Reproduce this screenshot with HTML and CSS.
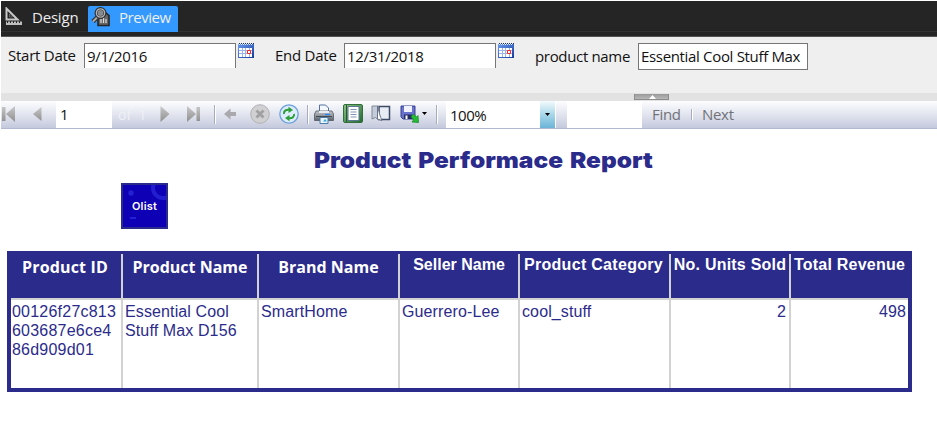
FILE: index.html
```html
<!DOCTYPE html>
<html lang="en">
<head>
<meta charset="utf-8">
<title>Product Performace Report</title>
<link rel="stylesheet" href="styles.css">
</head>
<body>
<svg class="defs" width="0" height="0" aria-hidden="true">
  <defs>
    <linearGradient id="grey" x1="0" y1="0" x2="0" y2="1"><stop offset="0" stop-color="#c9c9c9"/><stop offset="1" stop-color="#8f8f8f"/></linearGradient>
    <linearGradient id="blue" x1="0" y1="0" x2="1" y2="1"><stop offset="0" stop-color="#6b9af0"/><stop offset="1" stop-color="#173c9c"/></linearGradient>
    <linearGradient id="green" x1="0" y1="0" x2="1" y2="1"><stop offset="0" stop-color="#8fc487"/><stop offset="1" stop-color="#1f6b2c"/></linearGradient>
    <linearGradient id="steel" x1="0" y1="0" x2="0" y2="1"><stop offset="0" stop-color="#c4c8ce"/><stop offset="1" stop-color="#5c6068"/></linearGradient>
    <symbol id="calendar" viewBox="0 0 16 16">
      <rect y="1" width="16" height="14" fill="url(#blue)"/>
      <path d="M1 .5h15" stroke="#1c2f66" stroke-dasharray="1 1"/>
      <path d="M1 1.5h14" stroke="#dce8ff" stroke-dasharray="1 1"/>
      <path d="M1 5h13v9H1z" fill="#fff"/>
      <path d="M1 7.5h13M1 10.5h13M4.5 5v9M7.500 5v9M11.500 5v9" stroke="#9ab4e8"/>
      <path d="M9.500 7.500h3v3h-3z" fill="#fff" stroke="#f22"/>
    </symbol>
  </defs>
</svg>
<div class="app">
  <nav class="tabs">
    <div class="tab tab-design">
      <svg width="18" height="19" viewBox="0 0 18 19"><path d="M1.500 1.500v11h11z" fill="none" stroke="#c8c8c8" stroke-width="2"/><path d="M4.500 7v3h3z" fill="#252526" stroke="#888" stroke-width=".6"/><path d="M1 14.500h16v3.500H1z" fill="#bdbdbd"/><path d="M2.500 14v2M5.500 14v2M8.500 14v2M11.500 14v2M14.500 14v2" stroke="#252526"/></svg>
      <span>Design</span>
    </div>
    <div class="tab tab-preview">
      <svg width="20" height="20" viewBox="0 0 20 20"><path d="M7 5.500h7.500l3.500 3V18.500H7z" fill="#666" stroke="#262626" stroke-width="1.600"/><path d="M10 16v-4M12.500 16v-6M15 16v-4" stroke="#ddd" stroke-width="1.200"/><path d="M7 9.500 2 14.500" stroke="#303030" stroke-width="4.500"/><path d="M7 9.500 2 14.500" stroke="#aaa" stroke-width="2"/><circle cx="9.500" cy="6" r="4.500" fill="#878b8e" stroke="#303030" stroke-width="3"/><circle cx="9.500" cy="6" r="4.200" fill="none" stroke="#b6b6b6" stroke-width="1.200"/></svg>
      <span>Preview</span>
    </div>
  </nav>
  <section class="params">
    <label class="lb-start">Start Date</label>
    <div class="date">9/1/2016</div>
    <svg class="cal" width="16" height="16"><use href="#calendar"/></svg>
    <label class="lb-end">End Date</label>
    <div class="date">12/31/2018</div>
    <svg class="cal" width="16" height="16"><use href="#calendar"/></svg>
    <label class="lb-product">product name</label>
    <div class="name">Essential Cool Stuff Max</div>
  </section>
  <div class="splitter"><div class="grip"><svg width="7" height="4"><path d="M3.500 0 7 4H0z" fill="#fff"/></svg></div></div>
  <div class="toolbar">
    <svg class="c-first" width="13" height="16" viewBox="0 0 13 16"><path d="M0 1h3.500v14H0zM13 0v16L4 8z" fill="url(#grey)"/></svg>
    <svg class="c-prev" width="10" height="16" viewBox="0 0 10 16"><path d="M9.500 1v14L1 8z" fill="url(#grey)"/></svg>
    <div class="page">1</div>
    <span class="of">of&nbsp; 1</span>
    <svg class="c-next" width="10" height="16" viewBox="0 0 10 16"><path d="M.5 0v16L9.500 8z" fill="url(#grey)"/></svg>
    <svg class="c-last" width="13" height="16" viewBox="0 0 13 16"><path d="M9.500 1H13v14H9.500zM0 0v16l9-8z" fill="url(#grey)"/></svg>
    <i class="sep c-s1"></i>
    <svg class="c-back" width="12" height="12" viewBox="0 0 12 12"><path d="M0 6 6.500.5V4H12v4H6.500v3.500z" fill="#a9a9ad"/></svg>
    <svg class="c-stop" width="20" height="20" viewBox="0 0 20 20"><circle cx="10" cy="10" r="9.300" fill="#d0d0d2" stroke="#b2b2b4"/><path d="m6.500 6.500 7 7m0-7-7 7" stroke="#a0a0a0" stroke-width="2.800"/></svg>
    <svg class="c-refresh" width="20" height="20" viewBox="0 0 20 20"><circle cx="10" cy="10" r="9.200" fill="#dcecfc" stroke="#6d9fdc" stroke-width="1.300"/><path d="M5 10C4.500 7 7 5.500 10 5.800M15 10c.5 3-2 4.500-5 4.200" fill="none" stroke="#2c9e38" stroke-width="2"/><path d="M9.500 2.800 14 6 9.500 9zM10.500 11 6 14l4.500 3.200z" fill="#2c9e38"/></svg>
    <i class="sep c-s2"></i>
    <svg class="c-print" width="20" height="20" viewBox="0 0 20 20"><path d="M5.500 8V1h6l3 3v4z" fill="#f4f8ff" stroke="#5370a0"/><path d="M2 7h16l1.500 3v6.500H.5V10z" fill="url(#steel)" stroke="#555a62" stroke-width=".8"/><path d="M5 7h10v2H5z" fill="#e7ebf2"/><path d="M11 10.500h5" stroke="#2784f0" stroke-width="1.300"/><path d="M2 12.500h16" stroke="#454a52"/><path d="M6 13.500h8v6H6z" fill="#e8f5ff" stroke="#4d7ca8"/><path d="M9 17.500 11 15l2 2.500z" fill="#38a9dc"/></svg>
    <svg class="c-layout" width="20" height="19" viewBox="0 0 20 19"><rect x=".5" y=".5" width="19" height="18" rx="1.500" fill="url(#green)" stroke="#326e3a"/><path d="M3.500 1v17" stroke="#245b2f"/><path d="M5 2.500h11v14H5z" fill="#fff" stroke="#5c739a"/><path d="M7.500 5.500h6M7.500 8h6M7.500 10.500h6M7.500 13h6" stroke="#8294b8"/></svg>
    <svg class="c-setup" width="20" height="17" viewBox="0 0 20 17"><path d="M8 1.500h10.500v13H8z" fill="#e6ebf4" stroke="#3c4a66" stroke-width="1.500"/><path d="M1 1h6.500v14L4.500 12.500 1 14z" fill="#c4ccd9" stroke="#808997"/><path d="M6.500 1C8 6 9 12 11 15.500L6.500 14z" fill="#fff" stroke="#697286"/></svg>
    <svg class="c-save" width="20" height="20" viewBox="0 0 20 20"><path d="M1 2h14v13H3l-2-2z" fill="#6872cc" stroke="#35418f"/><path d="M4 2h8v6H4z" fill="#f0f3ff"/><path d="M4 10.500h8V15H4z" fill="#252d68"/><path d="M5.500 11.500h2V15h-2z" fill="#fff"/><path d="m11 12.500 2.500-2.500 3 3 1.500-1.500.5 7-6.500-.5 1.500-2z" fill="#27bb35" stroke="#118020" stroke-width=".7"/></svg>
    <svg class="c-arrow" width="5" height="3"><path d="M0 0h5L2.500 3z" fill="#000"/></svg>
    <i class="sep c-s3"></i>
    <div class="zoom">100%</div>
    <div class="drop"><svg width="5" height="3"><path d="M0 0h5L2.500 3z" fill="#000"/></svg></div>
    <i class="gap"></i>
    <div class="search"></div>
    <span class="link c-find">Find</span>
    <i class="sep small"></i>
    <span class="link c-nextlink">Next</span>
  </div>
  <main class="report">
    <h1>Product Performace Report</h1>
    <div class="logo">
      <svg width="43" height="42" viewBox="0 0 43 42"><circle cx="8" cy="8" r="2.700" fill="#2420d4"/><circle cx="40" cy="3" r="10" fill="none" stroke="#221ed0" stroke-width="4"/><path d="M7 33h6" stroke="#2420d4" stroke-width="2"/></svg>
      <span>Olist</span>
    </div>
    <table>
      <colgroup><col class="w1"><col class="w2"><col class="w3"><col class="w4"><col class="w5"><col class="w6"><col class="w7"></colgroup>
      <thead><tr>
        <th class="low first">Product ID</th><th class="low">Product Name</th><th class="low">Brand Name</th>
        <th>Seller Name</th><th class="wide category">Product Category</th><th class="wide">No. Units Sold</th><th class="wide">Total Revenue</th>
      </tr></thead>
      <tbody><tr>
        <td class="id">00126f27c813<br>603687e6ce4<br>86d909d01</td><td>Essential Cool<br>Stuff Max D156</td><td>SmartHome</td><td>Guerrero-Lee</td><td>cool_stuff</td><td class="num units">2</td><td class="num">498</td>
      </tr></tbody>
    </table>
  </main>
</div>
</body>
</html>
```
FILE: styles.css
```css
* { box-sizing: border-box; }
body { margin: 0; background: #fff; font-family: "Open Sans", "Noto Sans", sans-serif; color: #111; }
svg { display: block; flex: none; }
.defs { position: absolute; }
.app { width: 937px; height: 422px; overflow: hidden; padding: 1px 0 0 1px; white-space: nowrap; }

.tabs { display: flex; height: 36px; background: #252526; border-bottom: 1px solid #555; padding-top: 5px; box-shadow: inset 0 -4px #252526, inset 0 -5px #333; }
.tab { display: flex; height: 26px; color: #eee; font-size: 15px; line-height: 21px; letter-spacing: -.2px; }
.tab-design { width: 87px; padding: 1px 0 0 4px; gap: 9px; }
.tab-preview { width: 90px; background: #3399ff; border-radius: 2px 2px 0 0; padding-left: 3px; gap: 8px; letter-spacing: -.45px; }
.tab-preview svg { margin-top: 1px; }
.tab-preview span { padding-top: 1px; }

.params { display: flex; height: 56px; background: #efefef; padding: 6px 0 0 7px; font-size: 15px; line-height: 24px; }
.params label { letter-spacing: -.25px; }
.lb-start { width: 76px; }
.date { width: 152px; height: 25px; background: #fff; border: 1px solid #767676; border-bottom: 0; padding-left: 2px; letter-spacing: -.3px; }
.cal { margin: 0 0 0 2px; }
.lb-end { width: 69px; margin-left: 21px; }
.params .lb-product { width: 103px; margin-left: 21px; padding-top: 1px; letter-spacing: -.33px; }
.name { width: 170px; height: 27px; background: #fff; border: 1px solid #767676; padding-left: 2px; letter-spacing: -.33px; }

.splitter { height: 8px; background: #e2e2e2; padding: 1px 0 0 633px; }
.grip { width: 35px; height: 6px; background: linear-gradient(#999, #b8b8b8); border: solid #8c8c8c; border-width: 0 1px 1px; padding: 1px 0 0 14px; }

.toolbar { display: flex; align-items: center; height: 28px; background: linear-gradient(#fdfdff, #e2e5ef 50%, #c4c9dd); border-bottom: 1px solid #b0b8d4; padding-left: 1px; font-size: 15px; }
.toolbar > * { flex: none; }
.toolbar > svg { margin-bottom: 2px; }
.c-prev { margin-left: 17px; }
.page { width: 56px; margin-left: 14px; }
.page, .zoom, .search { height: 27px; background: #fff; line-height: 27px; }
.page { padding-left: 4px; }
.of { width: 44px; margin: 0 0 1px 6px; color: #eef0f5; font-size: 14px; }
.c-next { margin-left: -2px; }
.c-last { margin-left: 17px; }
.sep { width: 2px; height: 19px; background: linear-gradient(90deg, #a5abc0 50%, #fff 50%); }
.c-s1 { margin-left: 14px; }
.c-back { margin-left: 8px; }
.c-stop { margin-left: 14px; }
.c-refresh { margin-left: 9px; }
.c-s2 { margin-left: 8px; }
.c-print { margin-left: 5px; }
.c-layout { margin-left: 9px; }
.c-setup { margin-left: 8px; }
.c-save { margin-left: 9px; }
.c-arrow { margin-left: 2px; }
.c-s3 { margin-left: 9px; }
.zoom { width: 94px; margin-left: 8px; padding-left: 4px; line-height: 29px; letter-spacing: -.5px; }
.drop { display: flex; align-items: center; justify-content: center; width: 15px; height: 27px; background: linear-gradient(#f4fbfe, #a9d7ea 50%, #6bb4d8); }
.gap { width: 1px; height: 27px; background: #fff; }
.search { width: 75px; margin-left: 11px; }
.link { color: #707278; padding-bottom: 2px; letter-spacing: -.3px; }
.c-find { width: 39px; margin-left: 10px; }
.small { height: 11px; }
.c-nextlink { margin-left: 9px; }

.report { color: #2b2b8b; font-family: "Liberation Sans", Arial, sans-serif; padding-left: 6px; }
h1 { width: 310px; margin: 0 0 0 307px; height: 54px; padding-top: 16px; font: 900 22px/30px Inter, sans-serif; word-spacing: 2px; transform: scaleX(1.11); transform-origin: left; }
.logo { display: grid; width: 47px; height: 46px; margin-left: 114px; border: 2px solid #2b2b8b; background: #0e00b4; }
.logo > * { grid-area: 1 / 1; }
.logo span { place-self: center; color: #fff; font: 600 11px/14px Inter, sans-serif; letter-spacing: .2px; }
table { width: 905px; height: 141px; margin-top: 22px; border-collapse: separate; border-spacing: 0; table-layout: fixed; border: 4px solid #2b2b8b; border-top-width: 3px; font-size: 16px; line-height: 19px; }
.w1 { width: 112px; } .w2 { width: 136px; } .w3 { width: 141px; } .w4 { width: 120px; } .w5 { width: 151px; } .w6 { width: 120px; } .w7 { width: 117px; }
th, td { vertical-align: top; border-right: 2px solid #d2d2d2; padding: 0; }
th:last-child, td:last-child { border-right: 0; }
th { height: 46px; background: #2b2b8b; color: #fff; border-bottom: 2px solid #d2d2d2; padding-top: 1px; }
th.low { font: 700 16px/20px "Open Sans", sans-serif; padding-top: 3px; }
th.first { letter-spacing: .15px; padding-right: 2px; }
th.wide { letter-spacing: .22px; }
th.category { padding-right: 2px; letter-spacing: .3px; }
td { height: 88px; padding: 2px 1px; letter-spacing: .12px; }
td + td { padding-left: 2px; }
td.id { letter-spacing: .22px; }
.num { text-align: right; padding-right: 2px; }
.units { padding-right: 3px; }
```
